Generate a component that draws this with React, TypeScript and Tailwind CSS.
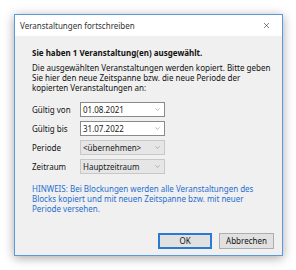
import { X, ChevronDown } from 'lucide-react'

// Dialog "Veranstaltungen fortschreiben", drawn small like a scaled screenshot

const font = { fontFamily: '"Noto Sans", "Open Sans", sans-serif' }

interface ComboProps {
  value: string
  disabled?: boolean
}

function Combo({ value, disabled = false }: ComboProps) {
  return (
    <div
      className={
        disabled
          ? 'flex h-[15px] w-[85px] items-center justify-between border border-[#c8c8c8] bg-[#e6e6e6] pl-[2px] pr-[3px]'
          : 'flex h-[15px] w-[85px] items-center justify-between border border-[#8a8a8a] bg-white pl-[2px] pr-[3px]'
      }
    >
      <span className="text-[8px] leading-none text-[#1a1a1a]">{value}</span>
      <ChevronDown className="h-[7px] w-[7px] text-[#777]" strokeWidth={1.75} />
    </div>
  )
}

const rows = [
  { label: 'Gültig von', value: '01.08.2021', disabled: false },
  { label: 'Gültig bis', value: '31.07.2022', disabled: false },
  { label: 'Periode', value: '<übernehmen>', disabled: true },
  { label: 'Zeitraum', value: 'Hauptzeitraum', disabled: true },
]

export default function App() {
  return (
    <div className="h-[270px] w-[296px] bg-white pl-[14px] pt-[14px]" style={font}>
      <div className="flex h-[242px] w-[269px] flex-col border border-[#5a9ad8] bg-[#f0f0f0] shadow-[0_2px_10px_rgba(0,0,0,0.35)]">
        {/* Title bar */}
        <div className="flex h-[21px] items-center justify-between bg-white pl-[5px] pr-[11px]">
          <span className="text-[8px] text-[#333]">Veranstaltungen fortschreiben</span>
          <X className="h-[9px] w-[9px] text-[#222]" strokeWidth={1.5} />
        </div>

        {/* Body */}
        <div className="flex flex-1 flex-col pl-[17px] pr-[8px] pt-[12px] text-[8px] text-[#111]">
          <p className="font-bold leading-[10px]">Sie haben 1 Veranstaltung(en) ausgewählt.</p>
          <p className="mt-[5px] leading-[10px]">
            Die ausgewählten Veranstaltungen werden kopiert. Bitte geben
            <br />
            Sie hier den neue Zeitspanne bzw. die neue Periode der
            <br />
            kopierten Veranstaltungen an:
          </p>

          <div className="mt-[9px] flex flex-col gap-[4px]">
            {rows.map((r) => (
              <div key={r.label} className="flex items-center">
                <span className="w-[48px]">{r.label}</span>
                <Combo value={r.value} disabled={r.disabled} />
              </div>
            ))}
          </div>

          <p className="mt-[10px] leading-[10px] text-[#1f6fd0]">
            HINWEIS: Bei Blockungen werden alle Veranstaltungen des
            <br />
            Blocks kopiert und mit neuen Zeitspanne bzw. mit neuer
            <br />
            Periode versehen.
          </p>

          <div className="mt-auto mb-[6px] flex justify-end gap-[7px]">
            <button className="h-[16px] w-[54px] border-2 border-[#2a7ad2] bg-[#e1e1e1] text-[8px] leading-none text-[#111]">
              OK
            </button>
            <button className="h-[16px] w-[55px] border border-[#adadad] bg-[#e1e1e1] text-[8px] leading-none text-[#111]">
              Abbrechen
            </button>
          </div>
        </div>
      </div>
    </div>
  )
}
